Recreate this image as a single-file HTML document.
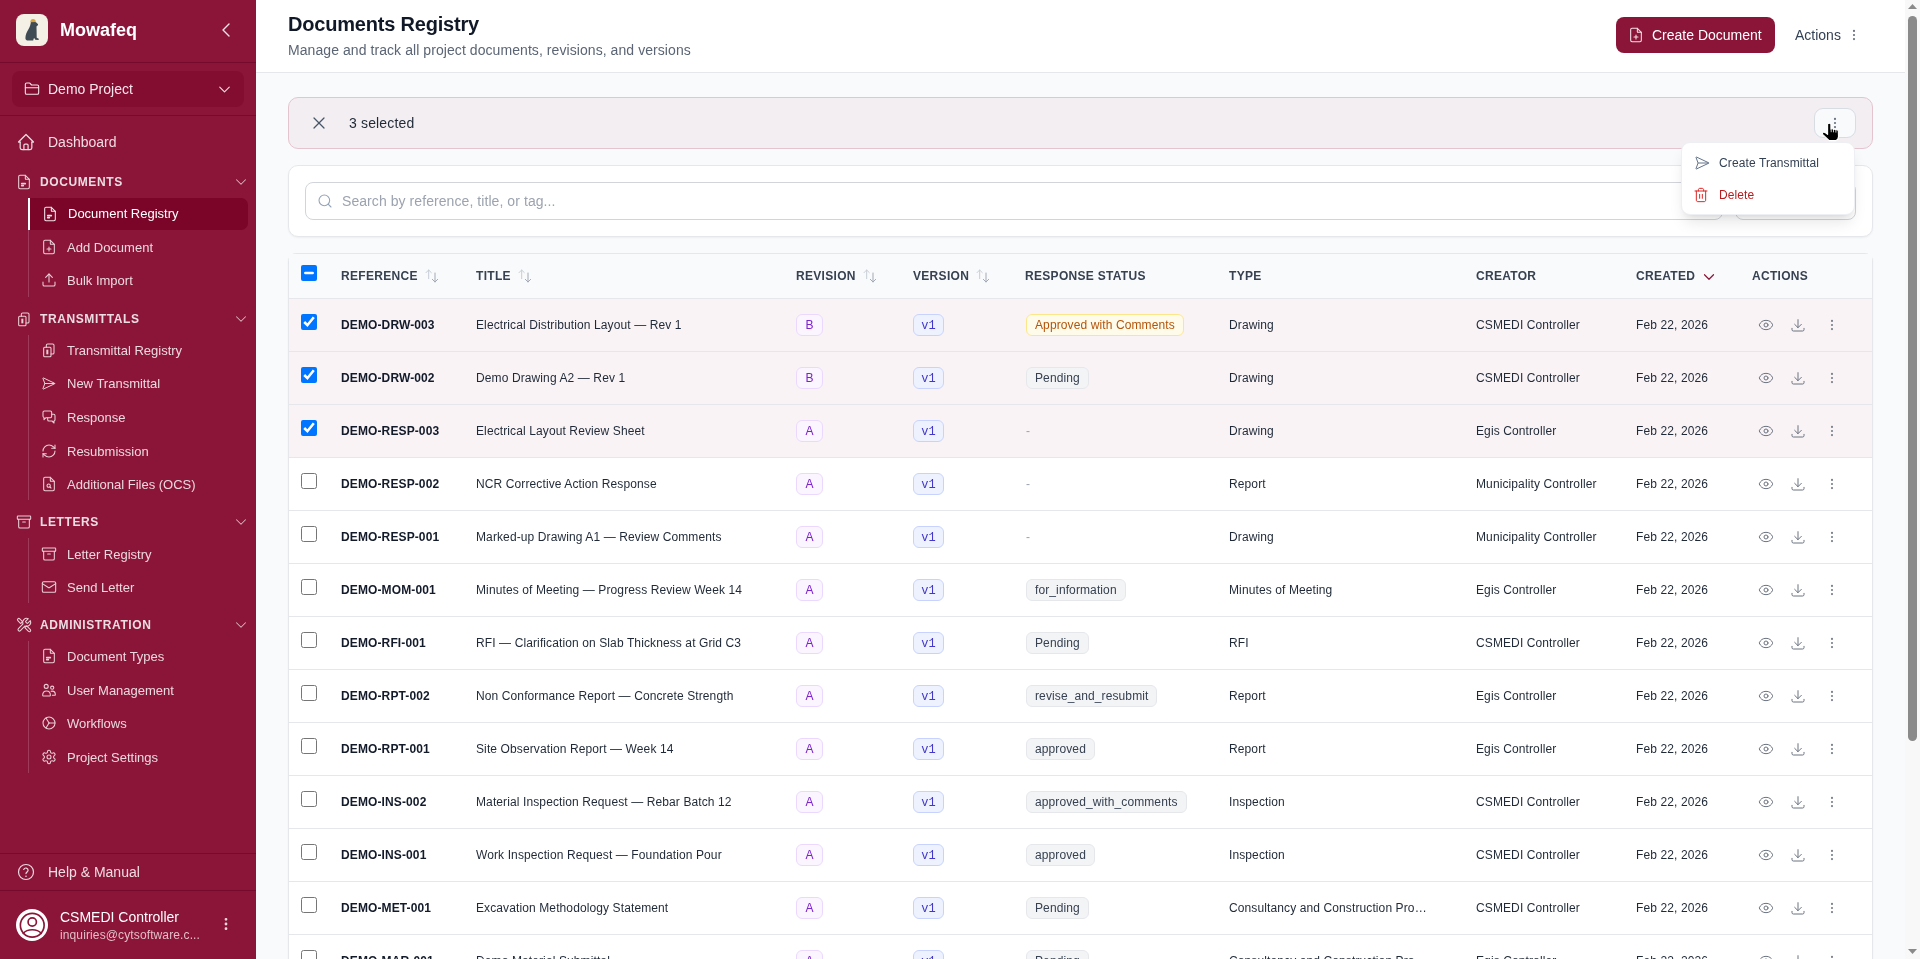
<!DOCTYPE html>
<html><head><meta charset="utf-8">
<style>
*{box-sizing:border-box;margin:0;padding:0}
html,body{width:1920px;height:959px;overflow:hidden;background:#F9FAFB;font-family:"Liberation Sans",sans-serif;}
.a{position:absolute;white-space:nowrap}
.ic{position:absolute;display:block;overflow:visible}
#sb{position:absolute;left:0;top:0;width:256px;height:959px;background:#8A1538;overflow:hidden}
.dv{position:absolute;left:0;width:256px;height:1px;background:#760A2C}
.nav{position:absolute;font-size:14px;line-height:20px;color:#F0DCE2;white-space:nowrap}
.grp{position:absolute;left:40px;font-size:12px;font-weight:bold;letter-spacing:0.05em;color:#ECDDE2;line-height:16px;white-space:nowrap}
.item{position:absolute;left:67px;font-size:13px;line-height:18px;color:#ECD9DF;white-space:nowrap}
.tree{position:absolute;left:28px;width:1px;background:#A03A5B}
.cell{position:absolute;font-size:12px;letter-spacing:0.11px;line-height:16px;color:#1F2937;white-space:nowrap}
.th{position:absolute;font-size:12px;font-weight:bold;letter-spacing:0.3px;line-height:16px;color:#374151;white-space:nowrap}
.bdg{position:absolute;height:22px;border:1px solid;border-radius:6px;font-size:12px;line-height:20px;padding:0 8px;white-space:nowrap}
.cb{position:absolute;width:16px;height:16px;margin:0}
</style></head><body>
<div id="root" style="position:absolute;left:0;top:0;width:1920px;height:959px;will-change:transform">

<div id="sb">
<div class="a" style="left:16px;top:14px;width:32px;height:32px;border-radius:8px;background:#F5F0E6"></div>
<svg class="ic" style="left:16px;top:14px" width="32" height="32" viewBox="0 0 32 32"><path d="M14.9 7.9C14.6 10 14 12.5 12.6 15C10.8 18 9.3 21 9.4 24.3C9.5 25.8 10.5 26.6 12.3 26.6L17.2 26.5L17.6 24.8C17.9 23.9 18.6 23.9 18.9 24.8L19.2 25.7L22.4 25.9C23 25.7 23 25 22.3 24.6L20.7 23.8L20.6 16.5C20.6 14.6 20.4 13.2 20.6 12.3L21.9 11.3C22.3 10.6 22 9.8 21.2 9.5C20.4 8.6 19.5 7.9 18.3 7.8Z" fill="#3F4C54"/><path d="M14.2 8.3C14.2 6.1 15.5 4.9 17 4.9C18.7 4.9 19.8 6 19.8 7.9Z" fill="#D7A53C"/></svg>
<div class="a" style="left:60px;top:19.26px;font-size:18px;line-height:22px;font-weight:bold;color:#fff">Mowafeq</div>
<svg class="ic" style="left:214px;top:18px;" width="24" height="24" viewBox="0 0 24 24" fill="none" stroke="#F4E4E9" stroke-width="1.4" stroke-linecap="round" stroke-linejoin="round"><path d="m15 18-6-6 6-6"/></svg>
<div class="dv" style="top:62px"></div>
<div class="a" style="left:12px;top:71px;width:232px;height:36px;border-radius:8px;background:#830D31"></div>
<svg class="ic" style="left:24px;top:81px;" width="16" height="16" viewBox="0 0 24 24" fill="none" stroke="#F6E8EC" stroke-width="1.6" stroke-linecap="round" stroke-linejoin="round"><path d="M20 20a2 2 0 0 0 2-2V8a2 2 0 0 0-2-2h-7.9a2 2 0 0 1-1.69-.9L9.6 3.9A2 2 0 0 0 7.93 3H4a2 2 0 0 0-2 2v13a2 2 0 0 0 2 2Z"/><path d="M2 10h20"/></svg>
<div class="nav" style="left:48px;top:79.45px;color:#F6E6EB">Demo Project</div>
<svg class="ic" style="left:214.5px;top:79.5px;" width="19" height="19" viewBox="0 0 24 24" fill="none" stroke="#F0D9DF" stroke-width="1.45" stroke-linecap="round" stroke-linejoin="round"><path d="m6 9 6 6 6-6"/></svg>
<div class="dv" style="top:115px"></div>
<svg class="ic" style="left:16px;top:132px;" width="20" height="20" viewBox="0 0 24 24" fill="none" stroke="#ECD9DF" stroke-width="1.5" stroke-linecap="round" stroke-linejoin="round"><path d="M5 12H3l9-9 9 9h-2"/><path d="M5 12v7a2 2 0 0 0 2 2h10a2 2 0 0 0 2-2v-7"/><path d="M9.5 21v-5a1.5 1.5 0 0 1 1.5-1.5h2a1.5 1.5 0 0 1 1.5 1.5v5"/></svg>
<div class="nav" style="left:48px;top:132.15px">Dashboard</div>
<svg class="ic" style="left:16px;top:174px;" width="16" height="16" viewBox="0 0 24 24" fill="none" stroke="#EBCFD7" stroke-width="1.6" stroke-linecap="round" stroke-linejoin="round"><path d="M14 2H6a2 2 0 0 0-2 2v16a2 2 0 0 0 2 2h12a2 2 0 0 0 2-2V8z"/><path d="M14 2v5a1 1 0 0 0 1 1h5"/><path d="M8.5 14.5h5.5" stroke-width="2.4"/><path d="M8.5 17.5h2.5" stroke-width="2.4"/></svg>
<div class="grp" style="top:174px">DOCUMENTS</div>
<svg class="ic" style="left:232px;top:173px;" width="18" height="18" viewBox="0 0 24 24" fill="none" stroke="#D9B3BF" stroke-width="1.4" stroke-linecap="round" stroke-linejoin="round"><path d="m6 9 6 6 6-6"/></svg>
<div class="tree" style="top:198px;height:99px"></div>
<div class="a" style="left:28px;top:198px;width:220px;height:32px;background:#7A0529;border-radius:0 7px 7px 0;border-left:2px solid #fff"></div>
<svg class="ic" style="left:42px;top:206px;" width="16" height="16" viewBox="0 0 24 24" fill="none" stroke="#F3E3E8" stroke-width="1.6" stroke-linecap="round" stroke-linejoin="round"><path d="M14 2H6a2 2 0 0 0-2 2v16a2 2 0 0 0 2 2h12a2 2 0 0 0 2-2V8z"/><path d="M14 2v5a1 1 0 0 0 1 1h5"/><path d="M8.5 14.5h5.5" stroke-width="2.4"/><path d="M8.5 17.5h2.5" stroke-width="2.4"/></svg>
<div class="item" style="top:205px;left:68px;color:#fff">Document Registry</div>
<svg class="ic" style="left:41px;top:239px;" width="16" height="16" viewBox="0 0 24 24" fill="none" stroke="#EBCFD7" stroke-width="1.6" stroke-linecap="round" stroke-linejoin="round"><path d="M14 2H6a2 2 0 0 0-2 2v16a2 2 0 0 0 2 2h12a2 2 0 0 0 2-2V8z"/><path d="M14 2v5a1 1 0 0 0 1 1h5"/><path d="M9 15h6"/><path d="M12 18v-6"/></svg>
<div class="item" style="top:239px;">Add Document</div>
<svg class="ic" style="left:41px;top:272px;" width="16" height="16" viewBox="0 0 24 24" fill="none" stroke="#EBCFD7" stroke-width="1.6" stroke-linecap="round" stroke-linejoin="round"><path d="M21 15v4a2 2 0 0 1-2 2H5a2 2 0 0 1-2-2v-4"/><polyline points="17 8 12 3 7 8"/><line x1="12" x2="12" y1="3" y2="15"/></svg>
<div class="item" style="top:272px;">Bulk Import</div>
<svg class="ic" style="left:16px;top:311px;" width="16" height="16" viewBox="0 0 24 24" fill="none" stroke="#EBCFD7" stroke-width="1.6" stroke-linecap="round" stroke-linejoin="round"><rect x="4" y="8" width="11" height="14" rx="1.5"/><path d="M8 8V5a2 2 0 0 1 2-2h7.5a2 2 0 0 1 2 2v11a2 2 0 0 1-2 2H15"/><path d="M9.5 11.5v7" stroke-width="3" stroke-linecap="butt"/></svg>
<div class="grp" style="top:311px">TRANSMITTALS</div>
<svg class="ic" style="left:232px;top:310px;" width="18" height="18" viewBox="0 0 24 24" fill="none" stroke="#D9B3BF" stroke-width="1.4" stroke-linecap="round" stroke-linejoin="round"><path d="m6 9 6 6 6-6"/></svg>
<div class="tree" style="top:335px;height:165px"></div>
<svg class="ic" style="left:41px;top:342px;" width="16" height="16" viewBox="0 0 24 24" fill="none" stroke="#EBCFD7" stroke-width="1.6" stroke-linecap="round" stroke-linejoin="round"><rect x="4" y="8" width="11" height="14" rx="1.5"/><path d="M8 8V5a2 2 0 0 1 2-2h7.5a2 2 0 0 1 2 2v11a2 2 0 0 1-2 2H15"/><path d="M9.5 11.5v7" stroke-width="3" stroke-linecap="butt"/></svg>
<div class="item" style="top:342px;">Transmittal Registry</div>
<svg class="ic" style="left:40.5px;top:375.5px;" width="15" height="15" viewBox="0 0 24 24" fill="none" stroke="#EBCFD7" stroke-width="1.6" stroke-linecap="round" stroke-linejoin="round"><path d="M3.714 3.048a.498.498 0 0 0-.683.627l2.843 7.627a2 2 0 0 1 0 1.396l-2.842 7.627a.498.498 0 0 0 .682.627l18-8.5a.5.5 0 0 0 0-.904z"/><path d="M6 12h16"/></svg>
<div class="item" style="top:375px;">New Transmittal</div>
<svg class="ic" style="left:41px;top:409px;" width="16" height="16" viewBox="0 0 24 24" fill="none" stroke="#EBCFD7" stroke-width="1.6" stroke-linecap="round" stroke-linejoin="round"><path d="M3 5a2 2 0 0 1 2-2h9a2 2 0 0 1 2 2v6a2 2 0 0 1-2 2H7.5L4.5 16v-3.2A2 2 0 0 1 3 11z"/><path d="M16 8h3a2 2 0 0 1 2 2v6a2 2 0 0 1-1.5 1.9V21l-3-3H12a2 2 0 0 1-2-2v-2.5"/></svg>
<div class="item" style="top:409px;">Response</div>
<svg class="ic" style="left:41px;top:443px;" width="16" height="16" viewBox="0 0 24 24" fill="none" stroke="#EBCFD7" stroke-width="1.6" stroke-linecap="round" stroke-linejoin="round"><path d="M3 12a9 9 0 0 1 9-9 9.75 9.75 0 0 1 6.74 2.74L21 8"/><path d="M21 3v5h-5"/><path d="M21 12a9 9 0 0 1-9 9 9.75 9.75 0 0 1-6.74-2.74L3 16"/><path d="M8 16H3v5"/></svg>
<div class="item" style="top:443px;">Resubmission</div>
<svg class="ic" style="left:41px;top:476px;" width="16" height="16" viewBox="0 0 24 24" fill="none" stroke="#EBCFD7" stroke-width="1.6" stroke-linecap="round" stroke-linejoin="round"><path d="M14 2H6a2 2 0 0 0-2 2v16a2 2 0 0 0 2 2h12a2 2 0 0 0 2-2V8z"/><path d="M14 2v5a1 1 0 0 0 1 1h5"/><circle cx="11.5" cy="14.5" r="2.5"/><path d="M13.3 16.3 15 18"/></svg>
<div class="item" style="top:476px;">Additional Files (OCS)</div>
<svg class="ic" style="left:16px;top:514px;" width="16" height="16" viewBox="0 0 24 24" fill="none" stroke="#EBCFD7" stroke-width="1.6" stroke-linecap="round" stroke-linejoin="round"><rect width="20" height="5" x="2" y="3" rx="1"/><path d="M4 8v11a2 2 0 0 0 2 2h12a2 2 0 0 0 2-2V8"/><path d="M10 12h4"/></svg>
<div class="grp" style="top:514px">LETTERS</div>
<svg class="ic" style="left:232px;top:513px;" width="18" height="18" viewBox="0 0 24 24" fill="none" stroke="#D9B3BF" stroke-width="1.4" stroke-linecap="round" stroke-linejoin="round"><path d="m6 9 6 6 6-6"/></svg>
<div class="tree" style="top:538px;height:65px"></div>
<svg class="ic" style="left:41px;top:546px;" width="16" height="16" viewBox="0 0 24 24" fill="none" stroke="#EBCFD7" stroke-width="1.6" stroke-linecap="round" stroke-linejoin="round"><rect width="20" height="5" x="2" y="3" rx="1"/><path d="M4 8v11a2 2 0 0 0 2 2h12a2 2 0 0 0 2-2V8"/><path d="M10 12h4"/></svg>
<div class="item" style="top:546px;">Letter Registry</div>
<svg class="ic" style="left:41px;top:579px;" width="16" height="16" viewBox="0 0 24 24" fill="none" stroke="#EBCFD7" stroke-width="1.6" stroke-linecap="round" stroke-linejoin="round"><rect width="20" height="16" x="2" y="4" rx="2"/><path d="m22 7-8.97 5.7a1.94 1.94 0 0 1-2.06 0L2 7"/></svg>
<div class="item" style="top:579px;">Send Letter</div>
<svg class="ic" style="left:16px;top:617px;" width="16" height="16" viewBox="0 0 24 24" fill="none" stroke="#EBCFD7" stroke-width="1.6" stroke-linecap="round" stroke-linejoin="round"><path d="M14.7 6.3a1 1 0 0 0 0 1.4l1.6 1.6a1 1 0 0 0 1.4 0l3.77-3.77a6 6 0 0 1-7.94 7.94l-6.91 6.91a2.12 2.12 0 0 1-3-3l6.91-6.91a6 6 0 0 1 7.94-7.94l-3.76 3.76z"/><path d="M2.8 2.8a2 2 0 0 1 2.8 0l4.2 4.2-2.8 2.8-4.2-4.2a2 2 0 0 1 0-2.8z"/><path d="M13.2 16l2.8-2.8 5.6 5.6a2 2 0 0 1-2.8 2.8z"/></svg>
<div class="grp" style="top:617px">ADMINISTRATION</div>
<svg class="ic" style="left:232px;top:616px;" width="18" height="18" viewBox="0 0 24 24" fill="none" stroke="#D9B3BF" stroke-width="1.4" stroke-linecap="round" stroke-linejoin="round"><path d="m6 9 6 6 6-6"/></svg>
<div class="tree" style="top:641px;height:132px"></div>
<svg class="ic" style="left:41px;top:648px;" width="16" height="16" viewBox="0 0 24 24" fill="none" stroke="#EBCFD7" stroke-width="1.6" stroke-linecap="round" stroke-linejoin="round"><path d="M14 2H6a2 2 0 0 0-2 2v16a2 2 0 0 0 2 2h12a2 2 0 0 0 2-2V8z"/><path d="M14 2v5a1 1 0 0 0 1 1h5"/><path d="M8.5 14.5h5.5" stroke-width="2.4"/><path d="M8.5 17.5h2.5" stroke-width="2.4"/></svg>
<div class="item" style="top:648px;">Document Types</div>
<svg class="ic" style="left:41px;top:682px;" width="16" height="16" viewBox="0 0 24 24" fill="none" stroke="#EBCFD7" stroke-width="1.6" stroke-linecap="round" stroke-linejoin="round"><circle cx="7.8" cy="6.6" r="3"/><circle cx="16.8" cy="8.6" r="2.4"/><path d="M2.5 20c0-3.8 2.4-6.5 5.8-6.5s5.8 2.7 5.8 6.5c0 .6-.4 1-1 1H3.5c-.6 0-1-.4-1-1z"/><path d="M15.2 14c.5-.2 1.1-.3 1.7-.3 2.6 0 4.6 2.2 4.6 5.3 0 .6-.4 1-1 1h-3.5"/></svg>
<div class="item" style="top:682px;">User Management</div>
<svg class="ic" style="left:41px;top:715px;" width="16" height="16" viewBox="0 0 24 24" fill="none" stroke="#EBCFD7" stroke-width="1.6" stroke-linecap="round" stroke-linejoin="round"><circle cx="12" cy="12" r="9"/><path d="M12 12h9"/><path d="M12 12 7.5 4.5"/><path d="M12 12 7.5 19.5"/></svg>
<div class="item" style="top:715px;">Workflows</div>
<svg class="ic" style="left:41px;top:749px;" width="16" height="16" viewBox="0 0 24 24" fill="none" stroke="#EBCFD7" stroke-width="1.6" stroke-linecap="round" stroke-linejoin="round"><path d="M12.22 2h-.44a2 2 0 0 0-2 2v.18a2 2 0 0 1-1 1.73l-.43.25a2 2 0 0 1-2 0l-.15-.08a2 2 0 0 0-2.73.73l-.22.38a2 2 0 0 0 .73 2.73l.15.1a2 2 0 0 1 1 1.72v.51a2 2 0 0 1-1 1.74l-.15.09a2 2 0 0 0-.73 2.73l.22.38a2 2 0 0 0 2.73.73l.15-.08a2 2 0 0 1 2 0l.43.25a2 2 0 0 1 1 1.73V20a2 2 0 0 0 2 2h.44a2 2 0 0 0 2-2v-.18a2 2 0 0 1 1-1.73l.43-.25a2 2 0 0 1 2 0l.15.08a2 2 0 0 0 2.73-.73l.22-.39a2 2 0 0 0-.73-2.73l-.15-.08a2 2 0 0 1-1-1.74v-.5a2 2 0 0 1 1-1.74l.15-.09a2 2 0 0 0 .73-2.73l-.22-.38a2 2 0 0 0-2.73-.73l-.15.08a2 2 0 0 1-2 0l-.43-.25a2 2 0 0 1-1-1.73V4a2 2 0 0 0-2-2z"/><circle cx="12" cy="12" r="3"/></svg>
<div class="item" style="top:749px;">Project Settings</div>
<div class="dv" style="top:853px"></div>
<svg class="ic" style="left:17px;top:863px;" width="18" height="18" viewBox="0 0 24 24" fill="none" stroke="#ECD9DF" stroke-width="1.6" stroke-linecap="round" stroke-linejoin="round"><circle cx="12" cy="12" r="10"/><path d="M9 8.6a3 3 0 0 1 5.8 1.1c0 2-2.8 2.4-2.8 4.4"/><path d="M12 17.6h.01" stroke-width="2.2"/></svg>
<div class="nav" style="left:48px;top:861.95px">Help &amp; Manual</div>
<div class="dv" style="top:890px"></div>
<div class="a" style="left:16px;top:909px;width:32px;height:32px;border-radius:50%;background:#fff"></div>
<svg class="ic" style="left:17.75px;top:910.75px;" width="28.5" height="28.5" viewBox="0 0 24 24" fill="none" stroke="#8A1538" stroke-width="1.4" stroke-linecap="round" stroke-linejoin="round"><path d="M19.6 18.8c-1.7-1.9-4.4-3-7.6-3s-5.9 1.1-7.6 3"/><circle cx="12" cy="9.3" r="3.5"/><circle cx="12" cy="12" r="10"/></svg>
<div class="nav" style="left:60px;top:907.15px;color:#fff">CSMEDI Controller</div>
<div class="a" style="left:60px;top:926.64px;font-size:12px;letter-spacing:0.12px;line-height:16px;color:#E3BFC9">inquiries@cytsoftware.c...</div>
<svg class="ic" style="left:218px;top:916px;" width="16" height="16" viewBox="0 0 24 24" fill="none" stroke="#F0D9DF" stroke-width="2.2" stroke-linecap="round" stroke-linejoin="round"><circle cx="12" cy="12" r="1"/><circle cx="12" cy="5" r="1"/><circle cx="12" cy="19" r="1"/></svg>
</div>
<div class="a" style="left:256px;top:0;width:1649px;height:73px;background:#fff;border-bottom:1px solid #E5E7EB"></div>
<div class="a" style="left:288px;top:12.17px;font-size:20px;line-height:24px;font-weight:bold;color:#111827;letter-spacing:-0.2px">Documents Registry</div>
<div class="a" style="left:288px;top:39.95px;font-size:14px;line-height:20px;color:#5B6575;letter-spacing:0.07px">Manage and track all project documents, revisions, and versions</div>
<div class="a" style="left:1616px;top:17px;width:159px;height:36px;border-radius:8px;background:#8A1538"></div>
<svg class="ic" style="left:1628px;top:27px;" width="16" height="16" viewBox="0 0 24 24" fill="none" stroke="#F4E2E7" stroke-width="1.6" stroke-linecap="round" stroke-linejoin="round"><path d="M14 2H6a2 2 0 0 0-2 2v16a2 2 0 0 0 2 2h12a2 2 0 0 0 2-2V8z"/><path d="M14 2v5a1 1 0 0 0 1 1h5"/><path d="M9 15h6"/><path d="M12 18v-6"/></svg>
<div class="a" style="left:1652px;top:25.45px;font-size:14px;line-height:20px;color:#fff">Create Document</div>
<div class="a" style="left:1795px;top:25.45px;font-size:14px;line-height:20px;color:#334155">Actions</div>
<svg class="ic" style="left:1847px;top:28px;" width="14" height="14" viewBox="0 0 24 24" fill="none" stroke="#6B7280" stroke-width="1.8" stroke-linecap="round" stroke-linejoin="round"><circle cx="12" cy="12" r="1"/><circle cx="12" cy="5" r="1"/><circle cx="12" cy="19" r="1"/></svg>
<div class="a" style="left:288px;top:97px;width:1585px;height:52px;border-radius:10px;background:#F3EEF2;border:1px solid #E4C4CE"></div>
<svg class="ic" style="left:309px;top:113px;" width="20" height="20" viewBox="0 0 24 24" fill="none" stroke="#475569" stroke-width="1.5" stroke-linecap="round" stroke-linejoin="round"><path d="M18 6 6 18"/><path d="m6 6 12 12"/></svg>
<div class="a" style="left:349px;top:113.15px;font-size:14px;line-height:20px;color:#1F2937;letter-spacing:0.15px">3 selected</div>
<div class="a" style="left:1814px;top:108px;width:42px;height:30px;border-radius:9px;background:#F8FAFC;border:1px solid #D8DDE4"></div>
<svg class="ic" style="left:1828px;top:116px;" width="14" height="14" viewBox="0 0 24 24" fill="none" stroke="#6B7280" stroke-width="1.8" stroke-linecap="round" stroke-linejoin="round"><circle cx="12" cy="12" r="1"/><circle cx="12" cy="5" r="1"/><circle cx="12" cy="19" r="1"/></svg>
<div class="a" style="left:288px;top:165px;width:1585px;height:72px;border-radius:10px;background:#fff;border:1px solid #E5E7EB;box-shadow:0 1px 2px rgba(0,0,0,0.05)"></div>
<div class="a" style="left:305px;top:182px;width:1418px;height:38px;border-radius:8px;background:#fff;border:1px solid #D1D5DB"></div>
<svg class="ic" style="left:317px;top:193px;" width="16" height="16" viewBox="0 0 24 24" fill="none" stroke="#94A3B8" stroke-width="1.6" stroke-linecap="round" stroke-linejoin="round"><circle cx="11" cy="11" r="8"/><path d="m21 21-4.3-4.3"/></svg>
<div class="a" style="left:342px;top:191.15px;font-size:14px;line-height:20px;color:#9CA3AF;letter-spacing:0.07px">Search by reference, title, or tag...</div>
<div class="a" style="left:1735px;top:182px;width:121px;height:38px;border-radius:8px;background:#fff;border:1px solid #D1D5DB"></div>
<div class="a" style="left:288px;top:253px;width:1585px;height:800px;border-radius:8px 8px 0 0;background:#fff;border:1px solid #E5E7EB;box-shadow:0 1px 2px rgba(0,0,0,0.05)">
<div class="a" style="left:0;top:0;width:1583px;height:45px;background:#F9FAFB;border-bottom:1px solid #E5E7EB"></div>
</div>
<div class="th" style="left:341px;top:267.84px">REFERENCE</div>
<svg class="ic" style="left:424.0px;top:268px;" width="16" height="16" viewBox="0 0 24 24" fill="none" stroke="#B9C0CB" stroke-width="1.5" stroke-linecap="round" stroke-linejoin="round"><g stroke="#C8CED6"><path d="M7 3v13"/><path d="m3 7 4-4 4 4"/></g><g stroke="#A3AAB5"><path d="M16.5 7.5v13.5"/><path d="m12.5 17 4 4 4-4"/></g></svg>
<div class="th" style="left:476px;top:267.84px">TITLE</div>
<svg class="ic" style="left:517.0px;top:268px;" width="16" height="16" viewBox="0 0 24 24" fill="none" stroke="#B9C0CB" stroke-width="1.5" stroke-linecap="round" stroke-linejoin="round"><g stroke="#C8CED6"><path d="M7 3v13"/><path d="m3 7 4-4 4 4"/></g><g stroke="#A3AAB5"><path d="M16.5 7.5v13.5"/><path d="m12.5 17 4 4 4-4"/></g></svg>
<div class="th" style="left:796px;top:267.84px">REVISION</div>
<svg class="ic" style="left:862.0px;top:268px;" width="16" height="16" viewBox="0 0 24 24" fill="none" stroke="#B9C0CB" stroke-width="1.5" stroke-linecap="round" stroke-linejoin="round"><g stroke="#C8CED6"><path d="M7 3v13"/><path d="m3 7 4-4 4 4"/></g><g stroke="#A3AAB5"><path d="M16.5 7.5v13.5"/><path d="m12.5 17 4 4 4-4"/></g></svg>
<div class="th" style="left:913px;top:267.84px">VERSION</div>
<svg class="ic" style="left:975.0px;top:268px;" width="16" height="16" viewBox="0 0 24 24" fill="none" stroke="#B9C0CB" stroke-width="1.5" stroke-linecap="round" stroke-linejoin="round"><g stroke="#C8CED6"><path d="M7 3v13"/><path d="m3 7 4-4 4 4"/></g><g stroke="#A3AAB5"><path d="M16.5 7.5v13.5"/><path d="m12.5 17 4 4 4-4"/></g></svg>
<div class="th" style="left:1025px;top:267.84px">RESPONSE STATUS</div>
<div class="th" style="left:1229px;top:267.84px">TYPE</div>
<div class="th" style="left:1476px;top:267.84px">CREATOR</div>
<div class="th" style="left:1636px;top:267.84px">CREATED</div>
<svg class="ic" style="left:1699.5px;top:267.5px;" width="18" height="18" viewBox="0 0 24 24" fill="none" stroke="#8A1538" stroke-width="1.6" stroke-linecap="round" stroke-linejoin="round"><path d="m6 9 6 6 6-6"/></svg>
<div class="th" style="left:1752px;top:267.84px">ACTIONS</div>
<input type="checkbox" class="cb" id="hcb" checked style="left:301px;top:265px">
<div class="a" style="left:289px;top:299px;width:1583px;height:53px;background:#F9F3F5;border-bottom:1px solid #E5E7EB"></div>
<input type="checkbox" class="cb" checked style="left:301px;top:314px">
<div class="cell" style="left:341px;top:317.24px;font-weight:bold;color:#131B2B;letter-spacing:0.12px">DEMO-DRW-003</div>
<div class="cell" style="left:476px;top:317.24px">Electrical Distribution Layout — Rev 1</div>
<div class="bdg" style="left:796px;top:314px;background:#FAF5FF;border-color:#EBD8FE;color:#7E22CE;width:27px;padding:0;text-align:center">B</div>
<div class="bdg" style="left:913px;top:314px;background:#EEF2FF;border-color:#C7D2FE;color:#4338CA;font-family:'Liberation Mono',monospace;width:31px;padding:1px 0 0 0;text-align:center;line-height:20px">v1</div>
<div class="bdg" style="left:1026px;top:314px;background:#FFFBEB;border-color:#FDE68A;color:#B45309;letter-spacing:0.11px">Approved with Comments</div>
<div class="cell" style="left:1229px;top:317.24px;width:200px;overflow:hidden;text-overflow:ellipsis">Drawing</div>
<div class="cell" style="left:1476px;top:317.24px">CSMEDI Controller</div>
<div class="cell" style="left:1636px;top:317.24px">Feb 22, 2026</div>
<svg class="ic" style="left:1758px;top:317px;" width="16" height="16" viewBox="0 0 24 24" fill="none" stroke="#6B7280" stroke-width="1.5" stroke-linecap="round" stroke-linejoin="round"><path d="M2.062 12.348a1 1 0 0 1 0-.696 10.75 10.75 0 0 1 19.876 0 1 1 0 0 1 0 .696 10.75 10.75 0 0 1-19.876 0"/><circle cx="12" cy="12" r="3"/></svg>
<svg class="ic" style="left:1790px;top:317px;" width="16" height="16" viewBox="0 0 24 24" fill="none" stroke="#6B7280" stroke-width="1.5" stroke-linecap="round" stroke-linejoin="round"><path d="M3 17v2a2 2 0 0 0 2 2h14a2 2 0 0 0 2-2v-2"/><path d="m7 11 5 5 5-5"/><path d="M12 4v12"/></svg>
<svg class="ic" style="left:1825px;top:318px;" width="14" height="14" viewBox="0 0 24 24" fill="none" stroke="#7A818D" stroke-width="1.8" stroke-linecap="round" stroke-linejoin="round"><circle cx="12" cy="12" r="1"/><circle cx="12" cy="5" r="1"/><circle cx="12" cy="19" r="1"/></svg>
<div class="a" style="left:289px;top:352px;width:1583px;height:53px;background:#F9F3F5;border-bottom:1px solid #E5E7EB"></div>
<input type="checkbox" class="cb" checked style="left:301px;top:367px">
<div class="cell" style="left:341px;top:370.24px;font-weight:bold;color:#131B2B;letter-spacing:0.12px">DEMO-DRW-002</div>
<div class="cell" style="left:476px;top:370.24px">Demo Drawing A2 — Rev 1</div>
<div class="bdg" style="left:796px;top:367px;background:#FAF5FF;border-color:#EBD8FE;color:#7E22CE;width:27px;padding:0;text-align:center">B</div>
<div class="bdg" style="left:913px;top:367px;background:#EEF2FF;border-color:#C7D2FE;color:#4338CA;font-family:'Liberation Mono',monospace;width:31px;padding:1px 0 0 0;text-align:center;line-height:20px">v1</div>
<div class="bdg" style="left:1026px;top:367px;background:#F3F4F6;border-color:#E5E7EB;color:#374151;letter-spacing:0.11px">Pending</div>
<div class="cell" style="left:1229px;top:370.24px;width:200px;overflow:hidden;text-overflow:ellipsis">Drawing</div>
<div class="cell" style="left:1476px;top:370.24px">CSMEDI Controller</div>
<div class="cell" style="left:1636px;top:370.24px">Feb 22, 2026</div>
<svg class="ic" style="left:1758px;top:370px;" width="16" height="16" viewBox="0 0 24 24" fill="none" stroke="#6B7280" stroke-width="1.5" stroke-linecap="round" stroke-linejoin="round"><path d="M2.062 12.348a1 1 0 0 1 0-.696 10.75 10.75 0 0 1 19.876 0 1 1 0 0 1 0 .696 10.75 10.75 0 0 1-19.876 0"/><circle cx="12" cy="12" r="3"/></svg>
<svg class="ic" style="left:1790px;top:370px;" width="16" height="16" viewBox="0 0 24 24" fill="none" stroke="#6B7280" stroke-width="1.5" stroke-linecap="round" stroke-linejoin="round"><path d="M3 17v2a2 2 0 0 0 2 2h14a2 2 0 0 0 2-2v-2"/><path d="m7 11 5 5 5-5"/><path d="M12 4v12"/></svg>
<svg class="ic" style="left:1825px;top:371px;" width="14" height="14" viewBox="0 0 24 24" fill="none" stroke="#7A818D" stroke-width="1.8" stroke-linecap="round" stroke-linejoin="round"><circle cx="12" cy="12" r="1"/><circle cx="12" cy="5" r="1"/><circle cx="12" cy="19" r="1"/></svg>
<div class="a" style="left:289px;top:405px;width:1583px;height:53px;background:#F9F3F5;border-bottom:1px solid #E5E7EB"></div>
<input type="checkbox" class="cb" checked style="left:301px;top:420px">
<div class="cell" style="left:341px;top:423.24px;font-weight:bold;color:#131B2B;letter-spacing:0.12px">DEMO-RESP-003</div>
<div class="cell" style="left:476px;top:423.24px">Electrical Layout Review Sheet</div>
<div class="bdg" style="left:796px;top:420px;background:#FAF5FF;border-color:#EBD8FE;color:#7E22CE;width:27px;padding:0;text-align:center">A</div>
<div class="bdg" style="left:913px;top:420px;background:#EEF2FF;border-color:#C7D2FE;color:#4338CA;font-family:'Liberation Mono',monospace;width:31px;padding:1px 0 0 0;text-align:center;line-height:20px">v1</div>
<div class="cell" style="left:1026px;top:423.24px;color:#9CA3AF">-</div>
<div class="cell" style="left:1229px;top:423.24px;width:200px;overflow:hidden;text-overflow:ellipsis">Drawing</div>
<div class="cell" style="left:1476px;top:423.24px">Egis Controller</div>
<div class="cell" style="left:1636px;top:423.24px">Feb 22, 2026</div>
<svg class="ic" style="left:1758px;top:423px;" width="16" height="16" viewBox="0 0 24 24" fill="none" stroke="#6B7280" stroke-width="1.5" stroke-linecap="round" stroke-linejoin="round"><path d="M2.062 12.348a1 1 0 0 1 0-.696 10.75 10.75 0 0 1 19.876 0 1 1 0 0 1 0 .696 10.75 10.75 0 0 1-19.876 0"/><circle cx="12" cy="12" r="3"/></svg>
<svg class="ic" style="left:1790px;top:423px;" width="16" height="16" viewBox="0 0 24 24" fill="none" stroke="#6B7280" stroke-width="1.5" stroke-linecap="round" stroke-linejoin="round"><path d="M3 17v2a2 2 0 0 0 2 2h14a2 2 0 0 0 2-2v-2"/><path d="m7 11 5 5 5-5"/><path d="M12 4v12"/></svg>
<svg class="ic" style="left:1825px;top:424px;" width="14" height="14" viewBox="0 0 24 24" fill="none" stroke="#7A818D" stroke-width="1.8" stroke-linecap="round" stroke-linejoin="round"><circle cx="12" cy="12" r="1"/><circle cx="12" cy="5" r="1"/><circle cx="12" cy="19" r="1"/></svg>
<div class="a" style="left:289px;top:458px;width:1583px;height:53px;background:#fff;border-bottom:1px solid #E5E7EB"></div>
<input type="checkbox" class="cb"  style="left:301px;top:473px">
<div class="cell" style="left:341px;top:476.24px;font-weight:bold;color:#131B2B;letter-spacing:0.12px">DEMO-RESP-002</div>
<div class="cell" style="left:476px;top:476.24px">NCR Corrective Action Response</div>
<div class="bdg" style="left:796px;top:473px;background:#FAF5FF;border-color:#EBD8FE;color:#7E22CE;width:27px;padding:0;text-align:center">A</div>
<div class="bdg" style="left:913px;top:473px;background:#EEF2FF;border-color:#C7D2FE;color:#4338CA;font-family:'Liberation Mono',monospace;width:31px;padding:1px 0 0 0;text-align:center;line-height:20px">v1</div>
<div class="cell" style="left:1026px;top:476.24px;color:#9CA3AF">-</div>
<div class="cell" style="left:1229px;top:476.24px;width:200px;overflow:hidden;text-overflow:ellipsis">Report</div>
<div class="cell" style="left:1476px;top:476.24px">Municipality Controller</div>
<div class="cell" style="left:1636px;top:476.24px">Feb 22, 2026</div>
<svg class="ic" style="left:1758px;top:476px;" width="16" height="16" viewBox="0 0 24 24" fill="none" stroke="#6B7280" stroke-width="1.5" stroke-linecap="round" stroke-linejoin="round"><path d="M2.062 12.348a1 1 0 0 1 0-.696 10.75 10.75 0 0 1 19.876 0 1 1 0 0 1 0 .696 10.75 10.75 0 0 1-19.876 0"/><circle cx="12" cy="12" r="3"/></svg>
<svg class="ic" style="left:1790px;top:476px;" width="16" height="16" viewBox="0 0 24 24" fill="none" stroke="#6B7280" stroke-width="1.5" stroke-linecap="round" stroke-linejoin="round"><path d="M3 17v2a2 2 0 0 0 2 2h14a2 2 0 0 0 2-2v-2"/><path d="m7 11 5 5 5-5"/><path d="M12 4v12"/></svg>
<svg class="ic" style="left:1825px;top:477px;" width="14" height="14" viewBox="0 0 24 24" fill="none" stroke="#7A818D" stroke-width="1.8" stroke-linecap="round" stroke-linejoin="round"><circle cx="12" cy="12" r="1"/><circle cx="12" cy="5" r="1"/><circle cx="12" cy="19" r="1"/></svg>
<div class="a" style="left:289px;top:511px;width:1583px;height:53px;background:#fff;border-bottom:1px solid #E5E7EB"></div>
<input type="checkbox" class="cb"  style="left:301px;top:526px">
<div class="cell" style="left:341px;top:529.24px;font-weight:bold;color:#131B2B;letter-spacing:0.12px">DEMO-RESP-001</div>
<div class="cell" style="left:476px;top:529.24px">Marked-up Drawing A1 — Review Comments</div>
<div class="bdg" style="left:796px;top:526px;background:#FAF5FF;border-color:#EBD8FE;color:#7E22CE;width:27px;padding:0;text-align:center">A</div>
<div class="bdg" style="left:913px;top:526px;background:#EEF2FF;border-color:#C7D2FE;color:#4338CA;font-family:'Liberation Mono',monospace;width:31px;padding:1px 0 0 0;text-align:center;line-height:20px">v1</div>
<div class="cell" style="left:1026px;top:529.24px;color:#9CA3AF">-</div>
<div class="cell" style="left:1229px;top:529.24px;width:200px;overflow:hidden;text-overflow:ellipsis">Drawing</div>
<div class="cell" style="left:1476px;top:529.24px">Municipality Controller</div>
<div class="cell" style="left:1636px;top:529.24px">Feb 22, 2026</div>
<svg class="ic" style="left:1758px;top:529px;" width="16" height="16" viewBox="0 0 24 24" fill="none" stroke="#6B7280" stroke-width="1.5" stroke-linecap="round" stroke-linejoin="round"><path d="M2.062 12.348a1 1 0 0 1 0-.696 10.75 10.75 0 0 1 19.876 0 1 1 0 0 1 0 .696 10.75 10.75 0 0 1-19.876 0"/><circle cx="12" cy="12" r="3"/></svg>
<svg class="ic" style="left:1790px;top:529px;" width="16" height="16" viewBox="0 0 24 24" fill="none" stroke="#6B7280" stroke-width="1.5" stroke-linecap="round" stroke-linejoin="round"><path d="M3 17v2a2 2 0 0 0 2 2h14a2 2 0 0 0 2-2v-2"/><path d="m7 11 5 5 5-5"/><path d="M12 4v12"/></svg>
<svg class="ic" style="left:1825px;top:530px;" width="14" height="14" viewBox="0 0 24 24" fill="none" stroke="#7A818D" stroke-width="1.8" stroke-linecap="round" stroke-linejoin="round"><circle cx="12" cy="12" r="1"/><circle cx="12" cy="5" r="1"/><circle cx="12" cy="19" r="1"/></svg>
<div class="a" style="left:289px;top:564px;width:1583px;height:53px;background:#fff;border-bottom:1px solid #E5E7EB"></div>
<input type="checkbox" class="cb"  style="left:301px;top:579px">
<div class="cell" style="left:341px;top:582.24px;font-weight:bold;color:#131B2B;letter-spacing:0.12px">DEMO-MOM-001</div>
<div class="cell" style="left:476px;top:582.24px">Minutes of Meeting — Progress Review Week 14</div>
<div class="bdg" style="left:796px;top:579px;background:#FAF5FF;border-color:#EBD8FE;color:#7E22CE;width:27px;padding:0;text-align:center">A</div>
<div class="bdg" style="left:913px;top:579px;background:#EEF2FF;border-color:#C7D2FE;color:#4338CA;font-family:'Liberation Mono',monospace;width:31px;padding:1px 0 0 0;text-align:center;line-height:20px">v1</div>
<div class="bdg" style="left:1026px;top:579px;background:#F3F4F6;border-color:#E5E7EB;color:#374151;letter-spacing:0.11px">for_information</div>
<div class="cell" style="left:1229px;top:582.24px;width:200px;overflow:hidden;text-overflow:ellipsis">Minutes of Meeting</div>
<div class="cell" style="left:1476px;top:582.24px">Egis Controller</div>
<div class="cell" style="left:1636px;top:582.24px">Feb 22, 2026</div>
<svg class="ic" style="left:1758px;top:582px;" width="16" height="16" viewBox="0 0 24 24" fill="none" stroke="#6B7280" stroke-width="1.5" stroke-linecap="round" stroke-linejoin="round"><path d="M2.062 12.348a1 1 0 0 1 0-.696 10.75 10.75 0 0 1 19.876 0 1 1 0 0 1 0 .696 10.75 10.75 0 0 1-19.876 0"/><circle cx="12" cy="12" r="3"/></svg>
<svg class="ic" style="left:1790px;top:582px;" width="16" height="16" viewBox="0 0 24 24" fill="none" stroke="#6B7280" stroke-width="1.5" stroke-linecap="round" stroke-linejoin="round"><path d="M3 17v2a2 2 0 0 0 2 2h14a2 2 0 0 0 2-2v-2"/><path d="m7 11 5 5 5-5"/><path d="M12 4v12"/></svg>
<svg class="ic" style="left:1825px;top:583px;" width="14" height="14" viewBox="0 0 24 24" fill="none" stroke="#7A818D" stroke-width="1.8" stroke-linecap="round" stroke-linejoin="round"><circle cx="12" cy="12" r="1"/><circle cx="12" cy="5" r="1"/><circle cx="12" cy="19" r="1"/></svg>
<div class="a" style="left:289px;top:617px;width:1583px;height:53px;background:#fff;border-bottom:1px solid #E5E7EB"></div>
<input type="checkbox" class="cb"  style="left:301px;top:632px">
<div class="cell" style="left:341px;top:635.24px;font-weight:bold;color:#131B2B;letter-spacing:0.12px">DEMO-RFI-001</div>
<div class="cell" style="left:476px;top:635.24px">RFI — Clarification on Slab Thickness at Grid C3</div>
<div class="bdg" style="left:796px;top:632px;background:#FAF5FF;border-color:#EBD8FE;color:#7E22CE;width:27px;padding:0;text-align:center">A</div>
<div class="bdg" style="left:913px;top:632px;background:#EEF2FF;border-color:#C7D2FE;color:#4338CA;font-family:'Liberation Mono',monospace;width:31px;padding:1px 0 0 0;text-align:center;line-height:20px">v1</div>
<div class="bdg" style="left:1026px;top:632px;background:#F3F4F6;border-color:#E5E7EB;color:#374151;letter-spacing:0.11px">Pending</div>
<div class="cell" style="left:1229px;top:635.24px;width:200px;overflow:hidden;text-overflow:ellipsis">RFI</div>
<div class="cell" style="left:1476px;top:635.24px">CSMEDI Controller</div>
<div class="cell" style="left:1636px;top:635.24px">Feb 22, 2026</div>
<svg class="ic" style="left:1758px;top:635px;" width="16" height="16" viewBox="0 0 24 24" fill="none" stroke="#6B7280" stroke-width="1.5" stroke-linecap="round" stroke-linejoin="round"><path d="M2.062 12.348a1 1 0 0 1 0-.696 10.75 10.75 0 0 1 19.876 0 1 1 0 0 1 0 .696 10.75 10.75 0 0 1-19.876 0"/><circle cx="12" cy="12" r="3"/></svg>
<svg class="ic" style="left:1790px;top:635px;" width="16" height="16" viewBox="0 0 24 24" fill="none" stroke="#6B7280" stroke-width="1.5" stroke-linecap="round" stroke-linejoin="round"><path d="M3 17v2a2 2 0 0 0 2 2h14a2 2 0 0 0 2-2v-2"/><path d="m7 11 5 5 5-5"/><path d="M12 4v12"/></svg>
<svg class="ic" style="left:1825px;top:636px;" width="14" height="14" viewBox="0 0 24 24" fill="none" stroke="#7A818D" stroke-width="1.8" stroke-linecap="round" stroke-linejoin="round"><circle cx="12" cy="12" r="1"/><circle cx="12" cy="5" r="1"/><circle cx="12" cy="19" r="1"/></svg>
<div class="a" style="left:289px;top:670px;width:1583px;height:53px;background:#fff;border-bottom:1px solid #E5E7EB"></div>
<input type="checkbox" class="cb"  style="left:301px;top:685px">
<div class="cell" style="left:341px;top:688.24px;font-weight:bold;color:#131B2B;letter-spacing:0.12px">DEMO-RPT-002</div>
<div class="cell" style="left:476px;top:688.24px">Non Conformance Report — Concrete Strength</div>
<div class="bdg" style="left:796px;top:685px;background:#FAF5FF;border-color:#EBD8FE;color:#7E22CE;width:27px;padding:0;text-align:center">A</div>
<div class="bdg" style="left:913px;top:685px;background:#EEF2FF;border-color:#C7D2FE;color:#4338CA;font-family:'Liberation Mono',monospace;width:31px;padding:1px 0 0 0;text-align:center;line-height:20px">v1</div>
<div class="bdg" style="left:1026px;top:685px;background:#F3F4F6;border-color:#E5E7EB;color:#374151;letter-spacing:0.11px">revise_and_resubmit</div>
<div class="cell" style="left:1229px;top:688.24px;width:200px;overflow:hidden;text-overflow:ellipsis">Report</div>
<div class="cell" style="left:1476px;top:688.24px">Egis Controller</div>
<div class="cell" style="left:1636px;top:688.24px">Feb 22, 2026</div>
<svg class="ic" style="left:1758px;top:688px;" width="16" height="16" viewBox="0 0 24 24" fill="none" stroke="#6B7280" stroke-width="1.5" stroke-linecap="round" stroke-linejoin="round"><path d="M2.062 12.348a1 1 0 0 1 0-.696 10.75 10.75 0 0 1 19.876 0 1 1 0 0 1 0 .696 10.75 10.75 0 0 1-19.876 0"/><circle cx="12" cy="12" r="3"/></svg>
<svg class="ic" style="left:1790px;top:688px;" width="16" height="16" viewBox="0 0 24 24" fill="none" stroke="#6B7280" stroke-width="1.5" stroke-linecap="round" stroke-linejoin="round"><path d="M3 17v2a2 2 0 0 0 2 2h14a2 2 0 0 0 2-2v-2"/><path d="m7 11 5 5 5-5"/><path d="M12 4v12"/></svg>
<svg class="ic" style="left:1825px;top:689px;" width="14" height="14" viewBox="0 0 24 24" fill="none" stroke="#7A818D" stroke-width="1.8" stroke-linecap="round" stroke-linejoin="round"><circle cx="12" cy="12" r="1"/><circle cx="12" cy="5" r="1"/><circle cx="12" cy="19" r="1"/></svg>
<div class="a" style="left:289px;top:723px;width:1583px;height:53px;background:#fff;border-bottom:1px solid #E5E7EB"></div>
<input type="checkbox" class="cb"  style="left:301px;top:738px">
<div class="cell" style="left:341px;top:741.24px;font-weight:bold;color:#131B2B;letter-spacing:0.12px">DEMO-RPT-001</div>
<div class="cell" style="left:476px;top:741.24px">Site Observation Report — Week 14</div>
<div class="bdg" style="left:796px;top:738px;background:#FAF5FF;border-color:#EBD8FE;color:#7E22CE;width:27px;padding:0;text-align:center">A</div>
<div class="bdg" style="left:913px;top:738px;background:#EEF2FF;border-color:#C7D2FE;color:#4338CA;font-family:'Liberation Mono',monospace;width:31px;padding:1px 0 0 0;text-align:center;line-height:20px">v1</div>
<div class="bdg" style="left:1026px;top:738px;background:#F3F4F6;border-color:#E5E7EB;color:#374151;letter-spacing:0.11px">approved</div>
<div class="cell" style="left:1229px;top:741.24px;width:200px;overflow:hidden;text-overflow:ellipsis">Report</div>
<div class="cell" style="left:1476px;top:741.24px">Egis Controller</div>
<div class="cell" style="left:1636px;top:741.24px">Feb 22, 2026</div>
<svg class="ic" style="left:1758px;top:741px;" width="16" height="16" viewBox="0 0 24 24" fill="none" stroke="#6B7280" stroke-width="1.5" stroke-linecap="round" stroke-linejoin="round"><path d="M2.062 12.348a1 1 0 0 1 0-.696 10.75 10.75 0 0 1 19.876 0 1 1 0 0 1 0 .696 10.75 10.75 0 0 1-19.876 0"/><circle cx="12" cy="12" r="3"/></svg>
<svg class="ic" style="left:1790px;top:741px;" width="16" height="16" viewBox="0 0 24 24" fill="none" stroke="#6B7280" stroke-width="1.5" stroke-linecap="round" stroke-linejoin="round"><path d="M3 17v2a2 2 0 0 0 2 2h14a2 2 0 0 0 2-2v-2"/><path d="m7 11 5 5 5-5"/><path d="M12 4v12"/></svg>
<svg class="ic" style="left:1825px;top:742px;" width="14" height="14" viewBox="0 0 24 24" fill="none" stroke="#7A818D" stroke-width="1.8" stroke-linecap="round" stroke-linejoin="round"><circle cx="12" cy="12" r="1"/><circle cx="12" cy="5" r="1"/><circle cx="12" cy="19" r="1"/></svg>
<div class="a" style="left:289px;top:776px;width:1583px;height:53px;background:#fff;border-bottom:1px solid #E5E7EB"></div>
<input type="checkbox" class="cb"  style="left:301px;top:791px">
<div class="cell" style="left:341px;top:794.24px;font-weight:bold;color:#131B2B;letter-spacing:0.12px">DEMO-INS-002</div>
<div class="cell" style="left:476px;top:794.24px">Material Inspection Request — Rebar Batch 12</div>
<div class="bdg" style="left:796px;top:791px;background:#FAF5FF;border-color:#EBD8FE;color:#7E22CE;width:27px;padding:0;text-align:center">A</div>
<div class="bdg" style="left:913px;top:791px;background:#EEF2FF;border-color:#C7D2FE;color:#4338CA;font-family:'Liberation Mono',monospace;width:31px;padding:1px 0 0 0;text-align:center;line-height:20px">v1</div>
<div class="bdg" style="left:1026px;top:791px;background:#F3F4F6;border-color:#E5E7EB;color:#374151;letter-spacing:0.11px">approved_with_comments</div>
<div class="cell" style="left:1229px;top:794.24px;width:200px;overflow:hidden;text-overflow:ellipsis">Inspection</div>
<div class="cell" style="left:1476px;top:794.24px">CSMEDI Controller</div>
<div class="cell" style="left:1636px;top:794.24px">Feb 22, 2026</div>
<svg class="ic" style="left:1758px;top:794px;" width="16" height="16" viewBox="0 0 24 24" fill="none" stroke="#6B7280" stroke-width="1.5" stroke-linecap="round" stroke-linejoin="round"><path d="M2.062 12.348a1 1 0 0 1 0-.696 10.75 10.75 0 0 1 19.876 0 1 1 0 0 1 0 .696 10.75 10.75 0 0 1-19.876 0"/><circle cx="12" cy="12" r="3"/></svg>
<svg class="ic" style="left:1790px;top:794px;" width="16" height="16" viewBox="0 0 24 24" fill="none" stroke="#6B7280" stroke-width="1.5" stroke-linecap="round" stroke-linejoin="round"><path d="M3 17v2a2 2 0 0 0 2 2h14a2 2 0 0 0 2-2v-2"/><path d="m7 11 5 5 5-5"/><path d="M12 4v12"/></svg>
<svg class="ic" style="left:1825px;top:795px;" width="14" height="14" viewBox="0 0 24 24" fill="none" stroke="#7A818D" stroke-width="1.8" stroke-linecap="round" stroke-linejoin="round"><circle cx="12" cy="12" r="1"/><circle cx="12" cy="5" r="1"/><circle cx="12" cy="19" r="1"/></svg>
<div class="a" style="left:289px;top:829px;width:1583px;height:53px;background:#fff;border-bottom:1px solid #E5E7EB"></div>
<input type="checkbox" class="cb"  style="left:301px;top:844px">
<div class="cell" style="left:341px;top:847.24px;font-weight:bold;color:#131B2B;letter-spacing:0.12px">DEMO-INS-001</div>
<div class="cell" style="left:476px;top:847.24px">Work Inspection Request — Foundation Pour</div>
<div class="bdg" style="left:796px;top:844px;background:#FAF5FF;border-color:#EBD8FE;color:#7E22CE;width:27px;padding:0;text-align:center">A</div>
<div class="bdg" style="left:913px;top:844px;background:#EEF2FF;border-color:#C7D2FE;color:#4338CA;font-family:'Liberation Mono',monospace;width:31px;padding:1px 0 0 0;text-align:center;line-height:20px">v1</div>
<div class="bdg" style="left:1026px;top:844px;background:#F3F4F6;border-color:#E5E7EB;color:#374151;letter-spacing:0.11px">approved</div>
<div class="cell" style="left:1229px;top:847.24px;width:200px;overflow:hidden;text-overflow:ellipsis">Inspection</div>
<div class="cell" style="left:1476px;top:847.24px">CSMEDI Controller</div>
<div class="cell" style="left:1636px;top:847.24px">Feb 22, 2026</div>
<svg class="ic" style="left:1758px;top:847px;" width="16" height="16" viewBox="0 0 24 24" fill="none" stroke="#6B7280" stroke-width="1.5" stroke-linecap="round" stroke-linejoin="round"><path d="M2.062 12.348a1 1 0 0 1 0-.696 10.75 10.75 0 0 1 19.876 0 1 1 0 0 1 0 .696 10.75 10.75 0 0 1-19.876 0"/><circle cx="12" cy="12" r="3"/></svg>
<svg class="ic" style="left:1790px;top:847px;" width="16" height="16" viewBox="0 0 24 24" fill="none" stroke="#6B7280" stroke-width="1.5" stroke-linecap="round" stroke-linejoin="round"><path d="M3 17v2a2 2 0 0 0 2 2h14a2 2 0 0 0 2-2v-2"/><path d="m7 11 5 5 5-5"/><path d="M12 4v12"/></svg>
<svg class="ic" style="left:1825px;top:848px;" width="14" height="14" viewBox="0 0 24 24" fill="none" stroke="#7A818D" stroke-width="1.8" stroke-linecap="round" stroke-linejoin="round"><circle cx="12" cy="12" r="1"/><circle cx="12" cy="5" r="1"/><circle cx="12" cy="19" r="1"/></svg>
<div class="a" style="left:289px;top:882px;width:1583px;height:53px;background:#fff;border-bottom:1px solid #E5E7EB"></div>
<input type="checkbox" class="cb"  style="left:301px;top:897px">
<div class="cell" style="left:341px;top:900.24px;font-weight:bold;color:#131B2B;letter-spacing:0.12px">DEMO-MET-001</div>
<div class="cell" style="left:476px;top:900.24px">Excavation Methodology Statement</div>
<div class="bdg" style="left:796px;top:897px;background:#FAF5FF;border-color:#EBD8FE;color:#7E22CE;width:27px;padding:0;text-align:center">A</div>
<div class="bdg" style="left:913px;top:897px;background:#EEF2FF;border-color:#C7D2FE;color:#4338CA;font-family:'Liberation Mono',monospace;width:31px;padding:1px 0 0 0;text-align:center;line-height:20px">v1</div>
<div class="bdg" style="left:1026px;top:897px;background:#F3F4F6;border-color:#E5E7EB;color:#374151;letter-spacing:0.11px">Pending</div>
<div class="cell" style="left:1229px;top:900.24px;width:200px;overflow:hidden;text-overflow:ellipsis">Consultancy and Construction Professional Services</div>
<div class="cell" style="left:1476px;top:900.24px">CSMEDI Controller</div>
<div class="cell" style="left:1636px;top:900.24px">Feb 22, 2026</div>
<svg class="ic" style="left:1758px;top:900px;" width="16" height="16" viewBox="0 0 24 24" fill="none" stroke="#6B7280" stroke-width="1.5" stroke-linecap="round" stroke-linejoin="round"><path d="M2.062 12.348a1 1 0 0 1 0-.696 10.75 10.75 0 0 1 19.876 0 1 1 0 0 1 0 .696 10.75 10.75 0 0 1-19.876 0"/><circle cx="12" cy="12" r="3"/></svg>
<svg class="ic" style="left:1790px;top:900px;" width="16" height="16" viewBox="0 0 24 24" fill="none" stroke="#6B7280" stroke-width="1.5" stroke-linecap="round" stroke-linejoin="round"><path d="M3 17v2a2 2 0 0 0 2 2h14a2 2 0 0 0 2-2v-2"/><path d="m7 11 5 5 5-5"/><path d="M12 4v12"/></svg>
<svg class="ic" style="left:1825px;top:901px;" width="14" height="14" viewBox="0 0 24 24" fill="none" stroke="#7A818D" stroke-width="1.8" stroke-linecap="round" stroke-linejoin="round"><circle cx="12" cy="12" r="1"/><circle cx="12" cy="5" r="1"/><circle cx="12" cy="19" r="1"/></svg>
<div class="a" style="left:289px;top:935px;width:1583px;height:53px;background:#fff;border-bottom:1px solid #E5E7EB"></div>
<input type="checkbox" class="cb"  style="left:301px;top:950px">
<div class="cell" style="left:341px;top:953.24px;font-weight:bold;color:#131B2B;letter-spacing:0.12px">DEMO-MAR-001</div>
<div class="cell" style="left:476px;top:953.24px">Demo Material Submittal</div>
<div class="bdg" style="left:796px;top:950px;background:#FAF5FF;border-color:#EBD8FE;color:#7E22CE;width:27px;padding:0;text-align:center">A</div>
<div class="bdg" style="left:913px;top:950px;background:#EEF2FF;border-color:#C7D2FE;color:#4338CA;font-family:'Liberation Mono',monospace;width:31px;padding:1px 0 0 0;text-align:center;line-height:20px">v1</div>
<div class="bdg" style="left:1026px;top:950px;background:#F3F4F6;border-color:#E5E7EB;color:#374151;letter-spacing:0.11px">Pending</div>
<div class="cell" style="left:1229px;top:953.24px;width:200px;overflow:hidden;text-overflow:ellipsis">Consultancy and Construction Professional Services</div>
<div class="cell" style="left:1476px;top:953.24px">Egis Controller</div>
<div class="cell" style="left:1636px;top:953.24px">Feb 22, 2026</div>
<svg class="ic" style="left:1758px;top:953px;" width="16" height="16" viewBox="0 0 24 24" fill="none" stroke="#6B7280" stroke-width="1.5" stroke-linecap="round" stroke-linejoin="round"><path d="M2.062 12.348a1 1 0 0 1 0-.696 10.75 10.75 0 0 1 19.876 0 1 1 0 0 1 0 .696 10.75 10.75 0 0 1-19.876 0"/><circle cx="12" cy="12" r="3"/></svg>
<svg class="ic" style="left:1790px;top:953px;" width="16" height="16" viewBox="0 0 24 24" fill="none" stroke="#6B7280" stroke-width="1.5" stroke-linecap="round" stroke-linejoin="round"><path d="M3 17v2a2 2 0 0 0 2 2h14a2 2 0 0 0 2-2v-2"/><path d="m7 11 5 5 5-5"/><path d="M12 4v12"/></svg>
<svg class="ic" style="left:1825px;top:954px;" width="14" height="14" viewBox="0 0 24 24" fill="none" stroke="#7A818D" stroke-width="1.8" stroke-linecap="round" stroke-linejoin="round"><circle cx="12" cy="12" r="1"/><circle cx="12" cy="5" r="1"/><circle cx="12" cy="19" r="1"/></svg>
<div class="a" style="left:1681px;top:142px;width:174px;height:73px;border-radius:9px;background:#fff;border:1px solid #EDEFF2;box-shadow:0 10px 15px -3px rgba(0,0,0,0.1),0 4px 6px -4px rgba(0,0,0,0.1)"></div>
<svg class="ic" style="left:1693.5px;top:155px;" width="16" height="16" viewBox="0 0 24 24" fill="none" stroke="#64748B" stroke-width="1.5" stroke-linecap="round" stroke-linejoin="round"><path d="M3.714 3.048a.498.498 0 0 0-.683.627l2.843 7.627a2 2 0 0 1 0 1.396l-2.842 7.627a.498.498 0 0 0 .682.627l18-8.5a.5.5 0 0 0 0-.904z"/><path d="M6 12h16"/></svg>
<div class="a" style="left:1719px;top:154.74px;font-size:12px;letter-spacing:0.11px;line-height:16px;color:#334155">Create Transmittal</div>
<svg class="ic" style="left:1693px;top:186.5px;" width="16" height="16" viewBox="0 0 24 24" fill="none" stroke="#DC2626" stroke-width="1.5" stroke-linecap="round" stroke-linejoin="round"><path d="M3 6h18"/><path d="M19 6v14c0 1-1 2-2 2H7c-1 0-2-1-2-2V6"/><path d="M8 6V4c0-1 1-2 2-2h4c1 0 2 1 2 2v2"/><line x1="10" x2="10" y1="11" y2="17"/><line x1="14" x2="14" y1="11" y2="17"/></svg>
<div class="a" style="left:1719px;top:187.24px;font-size:12px;letter-spacing:0.11px;line-height:16px;color:#B91C1C">Delete</div>
<div class="a" style="left:1905px;top:0;width:15px;height:959px;background:#F8F8F8"></div>
<div class="a" style="left:1908px;top:16px;width:9px;height:725px;border-radius:5px;background:#8A8A8A"></div>
<svg class="ic" style="left:1905px;top:0" width="15" height="15" viewBox="0 0 15 15"><path d="M3 9h9L7.5 4z" fill="#8A8A8A"/></svg>
<svg class="ic" style="left:1905px;top:944px" width="15" height="15" viewBox="0 0 15 15"><path d="M3 5h9L7.5 10z" fill="#8A8A8A"/></svg>
<svg class="ic" style="left:1821px;top:121px" width="20" height="22" viewBox="0 0 20 22"><path d="M6.6 3Q8.2 1.2 9.9 3L9.9 8.2Q11 7.3 12.2 8L12.4 8.6Q13.5 7.8 14.6 8.5L14.8 9Q16.2 8.4 17.3 9.5L17.5 15.6Q17.3 18.8 14.9 19.6L8.2 19.6L1.6 13.4Q0.9 12 2.2 11.2Q3.4 10.8 4.5 11.7L6.6 13.4Z" fill="#000" stroke="#fff" stroke-width="1.1" stroke-linejoin="round"/><path d="M10.2 8.6v2.6M12.5 8.9v2.4M14.9 9.4v2.2" stroke="#fff" stroke-width="0.8"/></svg>
</div>
<script>document.getElementById("hcb").indeterminate=true;</script>
</body></html>
